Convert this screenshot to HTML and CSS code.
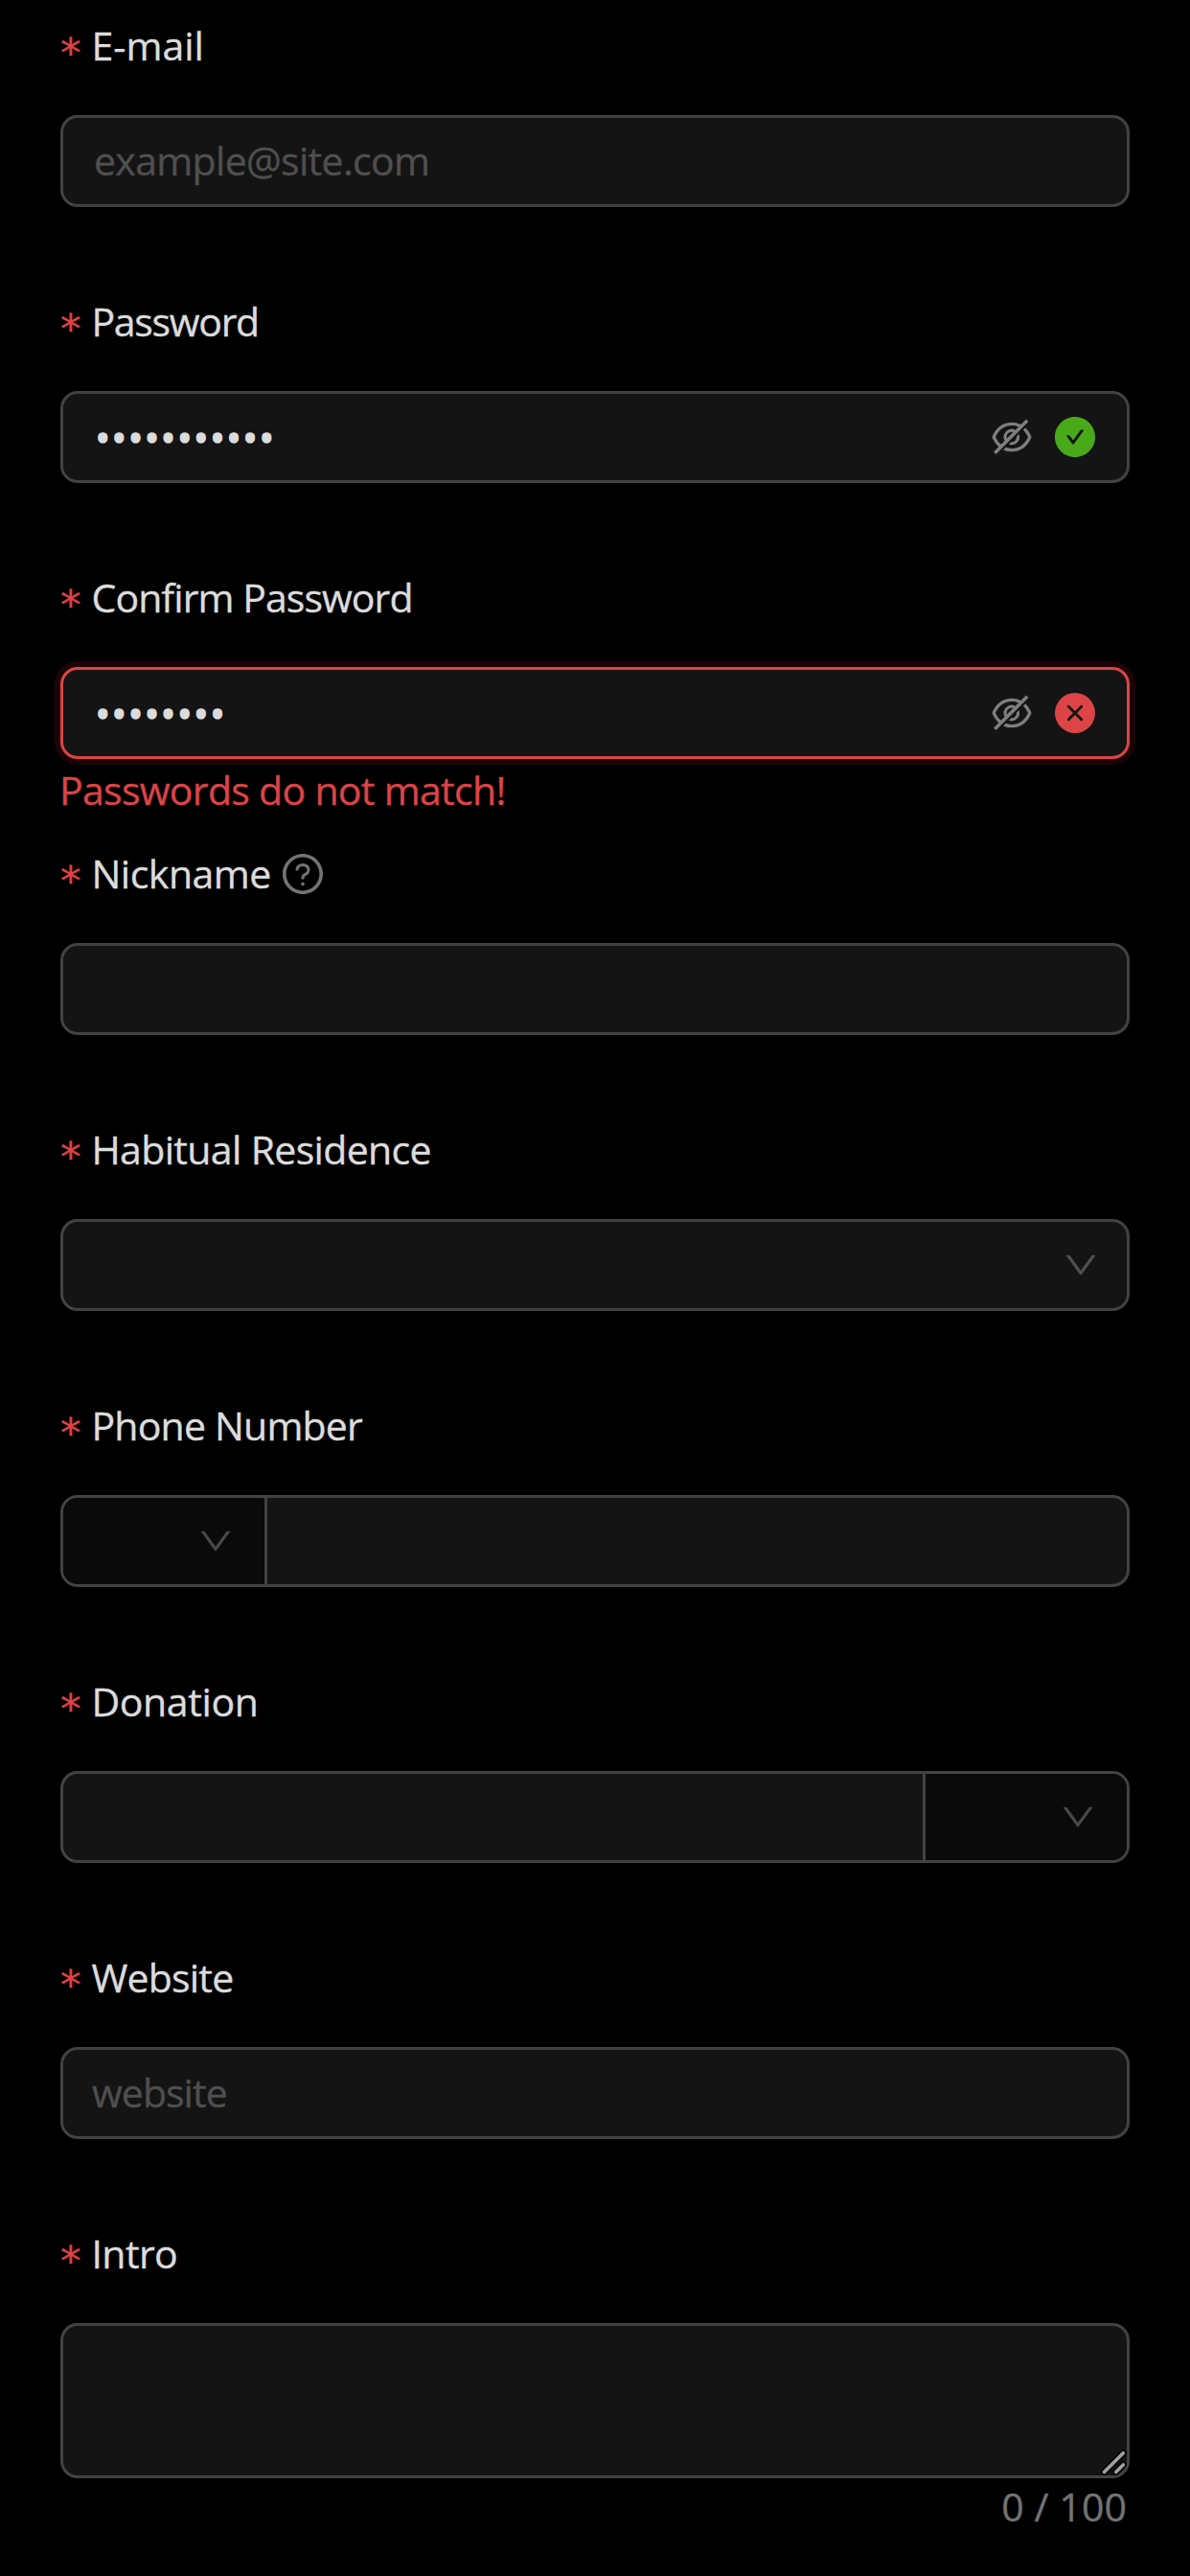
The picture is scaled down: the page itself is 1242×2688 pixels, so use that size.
FILE: index.html
```html
<!DOCTYPE html>
<html lang="en">
<head>
<meta charset="utf-8">
<title>Register</title>
<link rel="stylesheet" href="styles.css">
</head>
<body>
<svg class="defs" aria-hidden="true">
  <symbol id="down" viewBox="64 64 896 896"><path d="M884 256h-75c-5.1 0-9.9 2.5-12.9 6.6L512 654.2 227.9 262.6c-3-4.1-7.8-6.6-12.9-6.6h-75c-6.5 0-10.3 7.4-6.5 12.7l352.6 486.1c12.8 17.6 39 17.6 51.7 0l352.6-486.1c3.9-5.3.1-12.7-6.4-12.7z"/></symbol>
  <symbol id="eye-off" viewBox="64 64 896 896"><path d="M942.2 486.2Q889.47 375.11 816.7 305l-50.88 50.88C807.31 395.53 843.45 447.4 874.7 512 791.5 684.2 673.4 766 512 766q-72.67 0-133.87-22.38L323 798.75Q408 838 512 838q288.3 0 430.2-300.3a60.29 60.29 0 000-51.5zm-63.57-320.64L836 122.88a8 8 0 00-11.32 0L715.31 232.2Q624.86 186 512 186q-288.3 0-430.2 300.3a60.3 60.3 0 000 51.5q56.69 119.4 136.5 191.41L112.48 835a8 8 0 000 11.31L155.17 889a8 8 0 0011.31 0l712.15-712.12a8 8 0 000-11.32zM149.3 512C232.6 339.8 350.7 258 512 258c54.54 0 104.13 9.36 149.12 28.39l-70.3 70.3a176 176 0 00-238.13 238.13l-83.42 83.42C223.1 637.49 183.3 582.28 149.3 512zm246.7 0a112.11 112.11 0 01146.2-106.69L401.31 546.2A112 112 0 01396 512z"/><path d="M508 624c-3.46 0-6.87-.16-10.25-.47l-52.82 52.82a176.09 176.09 0 00227.42-227.42l-52.82 52.82c.31 3.38.47 6.79.47 10.25a111.94 111.94 0 01-112 112z"/></symbol>
</svg>
<form class="form">
  <div class="item">
    <div class="label"><span class="star">*</span><span class="t-email">E-mail</span></div>
    <div class="box"><span class="placeholder ph-email">example@site.com</span></div>
  </div>
  <div class="item">
    <div class="label"><span class="star">*</span><span class="t-password">Password</span></div>
    <div class="box">
      <span class="secret">•••••••••••</span>
      <svg class="icon eye"><use href="#eye-off"/></svg>
      <svg class="icon ok" viewBox="64 64 896 896"><path d="M512 64C264.6 64 64 264.6 64 512s200.6 448 448 448 448-200.6 448-448S759.4 64 512 64zm193.5 301.7l-210.6 292a31.8 31.8 0 01-51.7 0L318.5 484.9c-3.8-5.3 0-12.7 6.5-12.7h46.9c10.2 0 19.9 4.9 25.9 13.3l71.2 98.8 157.2-218c6-8.3 15.6-13.3 25.9-13.3H699c6.5 0 10.3 7.4 6.5 12.7z"/></svg>
    </div>
  </div>
  <div class="item">
    <div class="label"><span class="star">*</span><span class="t-confirm">Confirm Password</span></div>
    <div class="box box-error">
      <span class="secret">••••••••</span>
      <svg class="icon eye"><use href="#eye-off"/></svg>
      <svg class="icon bad" viewBox="0 0 42 42"><circle cx="21" cy="21" r="21"/><path class="cross" d="M14.3 14.3l13.4 13.4M27.7 14.3L14.3 27.7"/></svg>
    </div>
    <div class="error">Passwords do not match!</div>
  </div>
  <div class="item">
    <div class="label"><span class="star">*</span><span class="t-nickname">Nickname</span>
      <svg class="icon help" viewBox="64 64 896 896"><path d="M512 64C264.6 64 64 264.6 64 512s200.6 448 448 448 448-200.6 448-448S759.4 64 512 64zm0 820c-205.4 0-372-166.6-372-372s166.6-372 372-372 372 166.6 372 372-166.6 372-372 372z"/><path d="M623.6 316.7C593.6 290.4 554 276 512 276s-81.6 14.5-111.6 40.7C369.2 344 352 380.7 352 420v7.6c0 4.4 3.6 8 8 8h48c4.4 0 8-3.6 8-8V420c0-44.1 43.1-80 96-80s96 35.9 96 80c0 31.1-22 59.6-56.1 72.7-21.2 8.1-39.2 22.3-52.1 40.9-13.1 19-19.9 41.8-19.9 64.9V620c0 4.4 3.6 8 8 8h48c4.4 0 8-3.6 8-8v-22.7a48.3 48.3 0 0130.9-44.8c59-22.7 97.1-74.7 97.1-132.5.1-39.3-17.1-76-48.3-103.3zM472 732a40 40 0 1080 0 40 40 0 10-80 0z"/></svg>
    </div>
    <div class="box"></div>
  </div>
  <div class="item">
    <div class="label"><span class="star">*</span><span class="t-residence">Habitual Residence</span></div>
    <div class="box select"><svg class="arrow"><use href="#down"/></svg></div>
  </div>
  <div class="item">
    <div class="label"><span class="star">*</span><span class="t-phone">Phone Number</span></div>
    <div class="box group">
      <div class="addon before"><svg class="arrow"><use href="#down"/></svg></div>
      <div class="field"></div>
    </div>
  </div>
  <div class="item">
    <div class="label"><span class="star">*</span><span class="t-donation">Donation</span></div>
    <div class="box group">
      <div class="field"></div>
      <div class="addon after"><svg class="arrow"><use href="#down"/></svg></div>
    </div>
  </div>
  <div class="item">
    <div class="label"><span class="star">*</span><span class="t-website">Website</span></div>
    <div class="box autocomplete"><span class="placeholder ph-website">website</span></div>
  </div>
  <div class="item">
    <div class="label"><span class="star">*</span><span class="t-intro">Intro</span></div>
    <div class="box area">
      <svg class="grip" viewBox="0 0 27 27"><path class="grip-shade" d="M3.5 23.5L23.3 3.7M15.7 23.5L23.3 16"/><path class="grip-line" d="M3.5 23.5L23.3 3.7M15.7 23.5L23.3 16"/></svg>
    </div>
    <div class="count">0 / 100</div>
  </div>
</form>
</body>
</html>
```
FILE: styles.css
```css
* { box-sizing: border-box; }
body {
  margin: 0;
  background: #000;
  color: #dcdcdc;
  font: 41px/66px "Open Sans", "Noto Sans", sans-serif;
  font-kerning: none;
  -webkit-text-stroke: 0.35px currentColor;
}
.defs { display: none; }
.form {
  display: flex;
  flex-direction: column;
  padding: 0 63px;
  height: 2688px;
  overflow: hidden;
}
.item { flex: none; height: 288px; }
.item:last-child { height: 384px; }

.label {
  display: flex;
  align-items: center;
  height: 96px;
  margin-bottom: 24px;
  white-space: nowrap;
}
.label > span:not(.star) { padding-bottom: 2px; }
.star {
  width: 32.5px;
  padding-top: 14px;
  color: #dc4446;
  font: 43px/1 "DejaVu Sans", sans-serif;
  -webkit-text-stroke: 0.3px #dc4446;
}

.box {
  display: flex;
  align-items: center;
  height: 96px;
  padding: 0 33px 0 32px;
  border: 3px solid #424242;
  border-radius: 18px;
  background: #141414;
  white-space: nowrap;
}
.box-error {
  border-color: #dc4446;
  box-shadow: 0 0 0 6px #1c0406;
}
.placeholder { color: #4f4f4f; padding-bottom: 2px; }
.autocomplete { padding-left: 30px; }
.secret {
  flex: 1;
  padding-left: 1px;
  font-size: 44px;
  letter-spacing: 0.55px;
  -webkit-text-stroke: 1px currentColor;
}

.icon { flex: none; width: 42px; height: 42px; fill: currentColor; }
.eye { color: #7e7e7e; margin-right: 24px; }
.ok { color: #49aa19; }
.bad { color: #dc4446; }
.cross { fill: none; stroke: #141414; stroke-width: 2.9; stroke-linecap: round; }
.help { color: #737373; margin-left: 12px; }

.arrow { flex: none; width: 36px; height: 36px; fill: #4f4f4f; }
.select { justify-content: flex-end; padding-right: 30px; }
.group { padding: 0; overflow: hidden; }
.field { flex: 1; }
.addon {
  display: flex;
  align-items: center;
  justify-content: flex-end;
  width: 213px;
  height: 90px;
  padding-right: 33px;
  background: #0a0a0a;
}
.addon .arrow { fill: #484848; }
.before { border-right: 3px solid #424242; }
.after { border-left: 3px solid #424242; }

.error {
  height: 66px;
  margin: -1px 0 0 -1px;
  color: #dc4446;
  letter-spacing: -0.69px;
}
.area {
  height: 162px;
  padding: 0;
  align-items: flex-end;
  justify-content: flex-end;
}
.grip { width: 27px; height: 27px; fill: none; stroke-linecap: round; }
.grip-shade { stroke: #050505; stroke-width: 7; }
.grip-line { stroke: #a0a0a0; stroke-width: 3.6; }
.count {
  margin-top: -4px;
  padding-right: 3px;
  color: #737373;
  text-align: right;
  letter-spacing: 0.1px;
}

/* Per-string tracking */
.t-password { letter-spacing: -1.3px; }
.t-confirm { letter-spacing: -0.93px; }
.t-nickname { letter-spacing: -0.5px; }
.t-residence { letter-spacing: -0.65px; }
.t-phone { letter-spacing: -0.8px; }
.t-donation { letter-spacing: -0.4px; }
.t-website { letter-spacing: -0.8px; }
.t-intro { letter-spacing: -0.6px; }
.ph-email { letter-spacing: -0.67px; }
.ph-website { letter-spacing: -0.95px; }
```
